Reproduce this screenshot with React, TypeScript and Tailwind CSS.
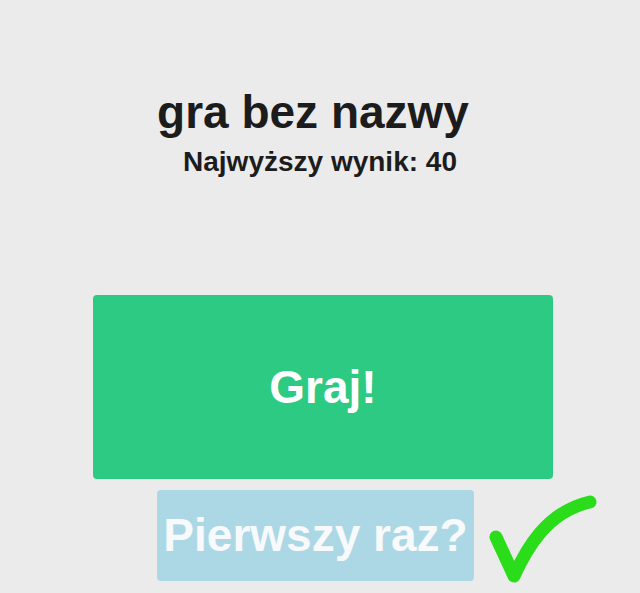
import React from 'react'

export default function App() {
    return (
        <div className="w-full min-h-screen bg-[#ebebeb] font-['Liberation_Sans',Arial,sans-serif] flex flex-col overflow-hidden">
            <h1 className="mt-[89px] pr-[14px] text-center text-[46px] leading-none font-bold text-[#1c1c1c]">
                gra bez nazwy
            </h1>
            <h3 className="mt-[13px] text-center text-[28px] leading-none font-bold text-[#1c1c1c]">
                Najwyższy wynik: 40
            </h3>

            <button className="mt-[119px] ml-[93px] w-[460px] h-[184px] rounded bg-[#2dca84] text-white text-[46px] font-bold">
                Graj!
            </button>

            <div className="mt-[11px] ml-[157px] flex items-start">
                <button className="w-[317px] h-[91px] rounded bg-[#acd8e6] text-[#f7f9fa] text-[46px] font-bold">
                    Pierwszy raz?
                </button>
                <svg className="ml-[6px]" width="120" height="95" viewBox="0 0 120 95" fill="none">
                    <path
                        d="M16 47 L34 86 C 46 60, 66 22, 110 12"
                        stroke="#2bdc1a"
                        strokeWidth="13"
                        strokeLinecap="round"
                        strokeLinejoin="round"
                    />
                </svg>
            </div>
        </div>
    )
}
